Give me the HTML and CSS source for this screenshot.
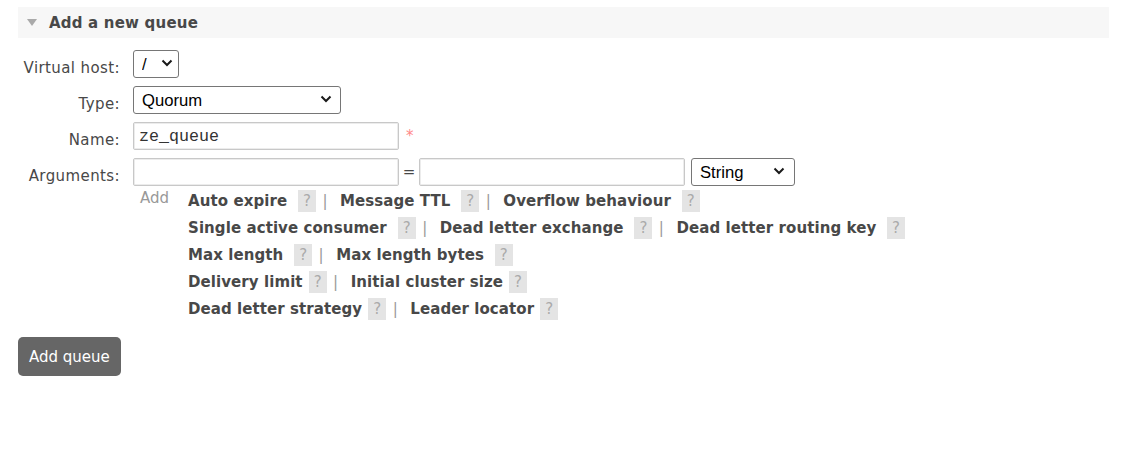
FILE: index.html
```html
<!DOCTYPE html>
<html lang="en">
<head>
<meta charset="utf-8">
<title>Add a new queue</title>
<link rel="stylesheet" href="styles.css">
</head>
<body>
<div class="page">
  <div class="section-head">
    <span class="tri"></span>
    <h2>Add a new queue</h2>
  </div>
  <form class="form">
    <div class="row">
      <label class="lbl">Virtual host:</label>
      <div class="sel sel-vhost">
        <select><option>/</option></select>
        <svg class="chev" width="12" height="8" viewBox="0 0 12 8"><path d="M1.5 1.5 L6 6 L10.5 1.5" /></svg>
      </div>
    </div>
    <div class="row">
      <label class="lbl">Type:</label>
      <div class="sel sel-type">
        <select><option>Quorum</option></select>
        <svg class="chev" width="12" height="8" viewBox="0 0 12 8"><path d="M1.5 1.5 L6 6 L10.5 1.5" /></svg>
      </div>
    </div>
    <div class="row">
      <label class="lbl">Name:</label>
      <input class="txt mono" type="text" value="ze_queue">
      <span class="req">*</span>
    </div>
    <div class="row last">
      <label class="lbl">Arguments:</label>
      <div class="args-body">
        <div class="multi">
          <input class="txt" type="text">
          <span class="eq">=</span>
          <input class="txt" type="text">
          <div class="sel sel-string">
            <select><option>String</option></select>
            <svg class="chev" width="12" height="8" viewBox="0 0 12 8"><path d="M1.5 1.5 L6 6 L10.5 1.5" /></svg>
          </div>
        </div>
        <div class="arg-links">
          <span class="add">Add</span>
          <div class="links">
            <div class="link-row"><span class="al">Auto expire</span> <span class="help">?</span><span class="sep">|</span><span class="al">Message TTL</span> <span class="help">?</span><span class="sep">|</span><span class="al">Overflow behaviour</span> <span class="help">?</span></div>
            <div class="link-row"><span class="al">Single active consumer</span> <span class="help">?</span><span class="sep">|</span><span class="al">Dead letter exchange</span> <span class="help">?</span><span class="sep">|</span><span class="al">Dead letter routing key</span> <span class="help">?</span></div>
            <div class="link-row"><span class="al">Max length</span> <span class="help">?</span><span class="sep">|</span><span class="al">Max length bytes</span> <span class="help">?</span></div>
            <div class="link-row"><span class="al">Delivery limit</span><span class="help">?</span><span class="sep">|</span><span class="al">Initial cluster size</span><span class="help">?</span></div>
            <div class="link-row"><span class="al">Dead letter strategy</span><span class="help">?</span><span class="sep">|</span><span class="al">Leader locator</span><span class="help">?</span></div>
          </div>
        </div>
      </div>
    </div>
  </form>
  <button class="btn" type="button">Add queue</button>
</div>
</body>
</html>
```

FILE: styles.css
```css
body {
  margin: 0;
  background: #fff;
  color: #484848;
  font-family: "DejaVu Sans", Verdana, sans-serif;
  font-size: 15px;
}

.page {
  padding: 7px 14px 0 18px;
}

.section-head {
  display: flex;
  align-items: center;
  height: 31px;
  background: #f7f7f7;
  padding-left: 9px;
}

.tri {
  width: 0;
  height: 0;
  border-left: 5.5px solid transparent;
  border-right: 5.5px solid transparent;
  border-top: 7px solid #aaa;
  margin-right: 12px;
}

.section-head h2 {
  margin: 0;
  font-size: 15px;
  font-weight: bold;
  line-height: 18px;
  letter-spacing: 0.2px;
  color: #484848;
}

.form {
  margin: 12px 0 0 0;
}

.row {
  display: flex;
  align-items: flex-start;
  margin-bottom: 8px;
}

.row.last {
  margin-bottom: 0;
}

.lbl {
  flex: none;
  width: 102px;
  margin-right: 13px;
  padding-top: 9px;
  text-align: right;
  line-height: 18px;
  letter-spacing: 0.4px;
}

.sel {
  position: relative;
  flex: none;
  height: 28px;
}

.sel select {
  appearance: none;
  -webkit-appearance: none;
  box-sizing: border-box;
  height: 28px;
  width: 100%;
  margin: 0;
  padding: 0 0 0 8px;
  border: 1px solid #767676;
  border-radius: 3px;
  background: #fff;
  color: #000;
  font-family: "Liberation Sans", Arial, sans-serif;
  font-size: 16.67px;
}

.chev {
  position: absolute;
  top: 9px;
  pointer-events: none;
}

.chev path {
  fill: none;
  stroke: #1a1a1a;
  stroke-width: 2;
}

.sel-vhost { width: 46px; }
.sel-vhost .chev { right: 6px; }

.sel-type { width: 208px; }
.sel-type .chev { right: 9px; }

.sel-string { width: 104px; margin-left: 6px; }
.sel-string .chev { right: 10px; }

.txt {
  box-sizing: border-box;
  flex: none;
  width: 266px;
  height: 28px;
  margin: 0;
  padding: 0 5px;
  border: 1px solid #c8c8c8;
  border-radius: 2px;
  box-shadow: inset 0 0 0 1px #ececec;
  background: #fff;
  color: #222;
  font-family: "Liberation Sans", Arial, sans-serif;
  font-size: 16.67px;
}

.txt.mono {
  font-family: "Liberation Mono", "Courier New", monospace;
  color: #333;
}

.req {
  margin: 5px 0 0 7px;
  line-height: 18px;
  color: #f88;
}

.args-body {
  display: flex;
  flex-direction: column;
}

.multi {
  display: flex;
  align-items: center;
}

.eq {
  width: 20px;
  text-align: center;
  line-height: 18px;
}

.arg-links {
  display: flex;
  align-items: flex-start;
  margin-top: 1px;
  padding-left: 7px;
}

.add {
  flex: none;
  width: 48px;
  margin-top: 2px;
  line-height: 18px;
  color: #999;
}

.links {
  line-height: 27px;
  padding-top: 1px;
}

.link-row {
  white-space: nowrap;
}

.al {
  font-weight: bold;
  letter-spacing: 0.08px;
  color: #484848;
}

.help {
  display: inline-block;
  width: 18px;
  height: 22px;
  line-height: 22px;
  margin-left: 6px;
  background: #e4e4e4;
  color: #aaa;
  text-align: center;
}

.sep {
  margin: 0 12.5px 0 6.5px;
  color: #999;
}

.btn {
  display: block;
  margin-top: 14px;
  padding: 10.5px 11px;
  border: none;
  border-radius: 5px;
  background: #666;
  color: #fff;
  font-family: "DejaVu Sans", Verdana, sans-serif;
  font-size: 15px;
  line-height: 18px;
}
```
